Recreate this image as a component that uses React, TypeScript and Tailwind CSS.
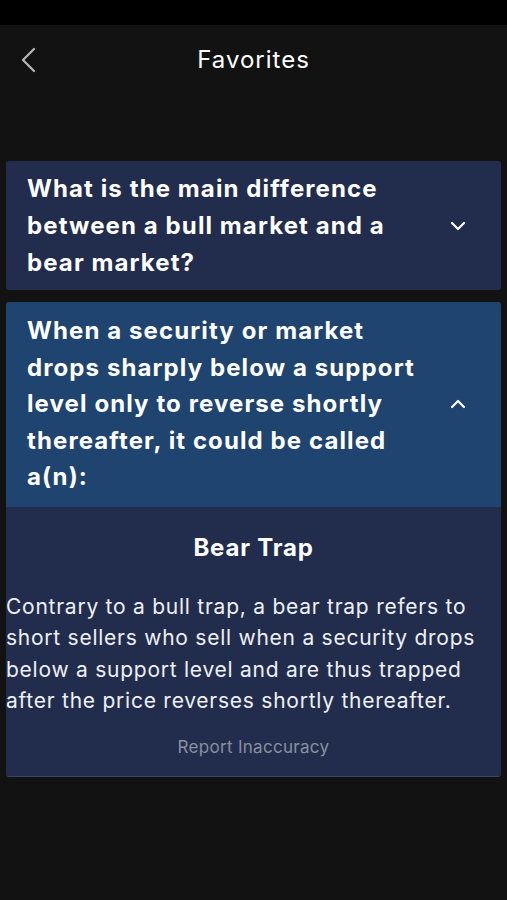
import React from "react";

function ChevronLeft() {
  return (
    <svg width="16" height="26" viewBox="0 0 16 26" fill="none">
      <path d="M14 2 L3 13 L14 24" stroke="#b8b8b8" strokeWidth="2.2" strokeLinecap="round" strokeLinejoin="round" />
    </svg>
  );
}

function Chevron({ up }: { up?: boolean }) {
  return (
    <svg width="16" height="10" viewBox="0 0 16 10" fill="none">
      <path
        d={up ? "M2 8 L8 2 L14 8" : "M2 2 L8 8 L14 2"}
        stroke="white"
        strokeWidth="2.2"
        strokeLinecap="round"
        strokeLinejoin="round"
      />
    </svg>
  );
}

export default function App() {
  const font = { fontFamily: "Inter, 'Noto Sans', sans-serif" };
  return (
    <div className="w-[507px] h-[900px] bg-[#121212] flex flex-col" style={font}>
      <div className="h-[25px] bg-black" />
      <div className="relative h-[70px] flex items-center justify-center">
        <div className="absolute left-[20px] top-[22px]">
          <ChevronLeft />
        </div>
        <div className="text-[24px] text-white tracking-[1px]">Favorites</div>
      </div>
      <div className="flex flex-col gap-[12px] px-[6px] pt-[66px]">
        <div className="bg-[#222d4e] rounded-[3px] flex items-center pl-[21px] pr-[35px] py-[9px]">
          <div className="w-[401px] text-white font-bold text-[24px] leading-[37px] tracking-[1.1px]">
            What is the main difference between a bull market and a bear market?
          </div>
          <div className="flex-1" />
          <Chevron />
        </div>
        <div className="rounded-[3px] overflow-hidden border-b border-[#3a4766]">
          <div className="bg-[#1f4470] flex items-center pl-[21px] pr-[35px] py-[11px]">
            <div className="w-[401px] text-white font-bold text-[24px] leading-[36.5px] tracking-[1.1px]">
              When a security or market drops sharply below a support level only to reverse shortly thereafter, it could be called a(n):
            </div>
            <div className="flex-1" />
            <Chevron up />
          </div>
          <div className="bg-[#222d4e] flex flex-col">
            <div className="text-center text-white font-bold text-[24px] leading-[30px] tracking-[0.8px] mt-[26px]">
              Bear Trap
            </div>
            <div className="text-[#eef0f5] text-[21px] leading-[31.5px] tracking-[0.75px] mt-[28px] pr-[20px]">
              Contrary to a bull trap, a bear trap refers to short sellers who sell when a security drops below a support level and are thus trapped after the price reverses shortly thereafter.
            </div>
            <div className="text-center text-[#8b909c] text-[17px] leading-[22px] tracking-[0.3px] mt-[19px] mb-[18px]">
              Report Inaccuracy
            </div>
          </div>
        </div>
      </div>
    </div>
  );
}
